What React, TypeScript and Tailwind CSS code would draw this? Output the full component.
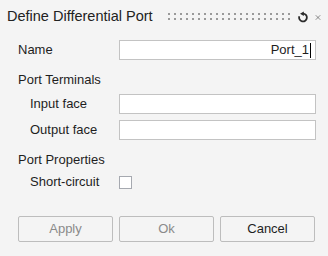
import { X } from "lucide-react";

const FONT = { fontFamily: '"Liberation Sans", Arial, sans-serif' };

function Grip() {
  const cols = Array.from({ length: 21 }, (_, i) => i);
  return (
    <svg width="122" height="8" viewBox="0 0 122 8" className="shrink-0">
      {cols.map((i) => (
        <g key={i} fill="#9a9a9a">
          <rect x={i * 6} y={0} width="2" height="2" />
          <rect x={i * 6} y={5} width="2" height="2" />
        </g>
      ))}
    </svg>
  );
}

function ResetIcon() {
  return (
    <svg width="12" height="12" viewBox="0 0 12 12" className="shrink-0">
      <path d="M6 2.6 A3.9 3.9 0 1 1 2.3 5.2" fill="none" stroke="#2a2a2a" strokeWidth="1.8" />
      <path d="M3 2.8 L6.8 0.4 L6.8 5 Z" fill="#2a2a2a" />
    </svg>
  );
}

function Row({ label, indent, children }: { label: string; indent?: boolean; children: React.ReactNode }) {
  return (
    <div className="flex items-center h-[20px]">
      <div className={`w-[119px] text-[13px] text-[#1e1e1e] ${indent ? "pl-[30px]" : "pl-[18px]"}`}>{label}</div>
      {children}
    </div>
  );
}

export default function App() {
  return (
    <div className="w-[328px] h-[256px] bg-[#f4f4f4] flex flex-col" style={FONT}>
      {/* HEADER */}
      <header className="h-[34px] flex items-center pl-[7px] pr-[6px]">
        <h1 className="text-[14.5px] text-[#222] w-[161px] shrink-0 whitespace-nowrap">Define Differential Port</h1>
        <Grip />
        <div className="ml-[7px]">
          <ResetIcon />
        </div>
        <X size={11} strokeWidth={1.6} className="ml-[5px] text-[#333]" />
      </header>

      <div className="mt-[6px]">
        <Row label="Name">
          <div className="w-[197px] h-[20px] bg-white border border-[#c3c3c3] flex items-center justify-end pr-[4px] text-[13px] text-[#1e1e1e]">
            Port_1<span className="w-px h-[15px] bg-black ml-[1px]" />
          </div>
        </Row>
      </div>

      <div className="mt-[10px] h-[20px] flex items-center pl-[18px] text-[13px] text-[#1e1e1e]">Port Terminals</div>

      <div className="mt-[4px]">
        <Row label="Input face" indent>
          <div className="w-[197px] h-[20px] bg-white border border-[#c3c3c3]" />
        </Row>
      </div>
      <div className="mt-[6px]">
        <Row label="Output face" indent>
          <div className="w-[197px] h-[20px] bg-white border border-[#c3c3c3]" />
        </Row>
      </div>

      <div className="mt-[10px] h-[20px] flex items-center pl-[18px] text-[13px] text-[#1e1e1e]">Port Properties</div>

      <div className="mt-[2px]">
        <Row label="Short-circuit" indent>
          <div className="w-[13px] h-[13px] bg-white border border-[#a6a9b0]" />
        </Row>
      </div>

      <div className="mt-[24px] flex gap-[6px] pl-[18px]">
        <button className="w-[95px] h-[26px] rounded-[2px] border border-[#bdbdbd] text-[13px] text-[#8a8a8a]">Apply</button>
        <button className="w-[95px] h-[26px] rounded-[2px] border border-[#bdbdbd] text-[13px] text-[#8a8a8a]">Ok</button>
        <button className="w-[95px] h-[26px] rounded-[2px] border border-[#bdbdbd] text-[13px] text-[#1e1e1e]">Cancel</button>
      </div>
    </div>
  );
}
